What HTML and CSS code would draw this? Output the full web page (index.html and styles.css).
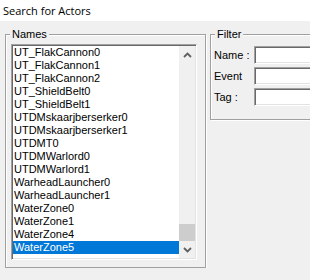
FILE: index.html
```html
<!DOCTYPE html>
<html>

<head>
    <meta charset="utf-8" />
    <title>Search for Actors</title>
    <meta name="viewport" content="width=device-width, initial-scale=1">
    <link rel="stylesheet" href="styles.css">
</head>

<body>
    <div class="titlebar">Search for Actors</div>

    <div class="main">
        <fieldset class="group names">
            <legend>Names</legend>
            <div class="listbox">
                <ul class="items">
                    <li>UT_FlakCannon0</li>
                    <li>UT_FlakCannon1</li>
                    <li>UT_FlakCannon2</li>
                    <li>UT_ShieldBelt0</li>
                    <li>UT_ShieldBelt1</li>
                    <li>UTDMskaarjberserker0</li>
                    <li>UTDMskaarjberserker1</li>
                    <li>UTDMT0</li>
                    <li>UTDMWarlord0</li>
                    <li>UTDMWarlord1</li>
                    <li>WarheadLauncher0</li>
                    <li>WarheadLauncher1</li>
                    <li>WaterZone0</li>
                    <li>WaterZone1</li>
                    <li>WaterZone4</li>
                    <li class="selected">WaterZone5</li>
                </ul>
                <div class="scrollbar">
                    <div class="arrow">
                        <svg width="9" height="6" viewBox="0 0 9 6"><polyline points="1,5 4.5,1.5 8,5" fill="none" stroke="#606060" stroke-width="1.8" /></svg>
                    </div>
                    <div class="track">
                        <div class="thumb"></div>
                    </div>
                    <div class="arrow">
                        <svg width="9" height="6" viewBox="0 0 9 6"><polyline points="1,1 4.5,4.5 8,1" fill="none" stroke="#606060" stroke-width="1.8" /></svg>
                    </div>
                </div>
            </div>
        </fieldset>

        <fieldset class="group filter">
            <legend>Filter</legend>
            <div class="fields">
                <label for="name">Name :</label>
                <input id="name" type="text">
                <label for="event">Event</label>
                <input id="event" type="text">
                <label for="tag">Tag :</label>
                <input id="tag" type="text">
            </div>
        </fieldset>
    </div>
</body>

</html>
```

FILE: styles.css
```css
body {
    margin: 0;
    background-color: #f0f0f0;
    font-family: "Liberation Sans", Arial, sans-serif;
    font-size: 11px;
    color: #000;
    overflow: hidden;
}

.titlebar {
    height: 21px;
    line-height: 21px;
    padding-left: 3px;
    background-color: #fff;
    font-family: "Open Sans", sans-serif;
    font-size: 11px;
}

.main {
    display: flex;
    gap: 4px;
    padding-left: 5px;
    margin-top: 7px;
}

.group {
    margin: 0;
    min-width: 0;
    box-sizing: border-box;
    border: solid 1px #a0a0a0;
    box-shadow: 1px 1px 0 #fff, inset 1px 1px 0 #fff;
}

.group legend {
    line-height: 13px;
    padding: 0 2px;
    background-color: #f0f0f0;
}

.names {
    width: 201px;
    padding: 3px 8px 7px 5px;
    flex: none;
}

.names legend {
    margin-left: -1px;
}

.filter {
    flex: 1;
    margin-right: -12px;
    padding: 5px 0 13px 3px;
    align-self: flex-start;
}

.filter legend {
    margin-left: 1px;
}

.listbox {
    display: flex;
    width: 182px;
    height: 212px;
    background-color: #fff;
    border: solid 1px;
    border-color: #a0a0a0 #fff #fff #a0a0a0;
    box-shadow: inset 1px 1px 0 #696969, inset -1px -1px 0 #e3e3e3;
    padding: 1px;
}

.items {
    list-style-type: none;
    margin: 0;
    padding: 0;
    flex: 1;
}

.items li {
    height: 13px;
    line-height: 13px;
    padding-left: 1px;
    white-space: nowrap;
}

.items .selected {
    background-color: #0078d7;
    color: #fff;
}

.scrollbar {
    width: 16px;
    display: flex;
    flex-direction: column;
    background-color: #f0f0f0;
}

.arrow {
    height: 17px;
    display: flex;
    align-items: center;
    justify-content: center;
}

.track {
    flex: 1;
    display: flex;
    flex-direction: column;
    justify-content: flex-end;
}

.thumb {
    height: 17px;
    background-color: #cdcdcd;
}

.fields {
    display: grid;
    grid-template-columns: 40px 1fr;
    row-gap: 3px;
    align-items: center;
}

.fields label {
    line-height: 18px;
}

.fields input {
    height: 18px;
    min-width: 0;
    box-sizing: border-box;
    margin: 0;
    padding: 0 2px;
    background-color: #fff;
    border: solid 1px;
    border-color: #a0a0a0 #fff #fff #a0a0a0;
    box-shadow: inset 1px 1px 0 #696969, inset -1px -1px 0 #e3e3e3;
    font: inherit;
    outline: none;
}
```
